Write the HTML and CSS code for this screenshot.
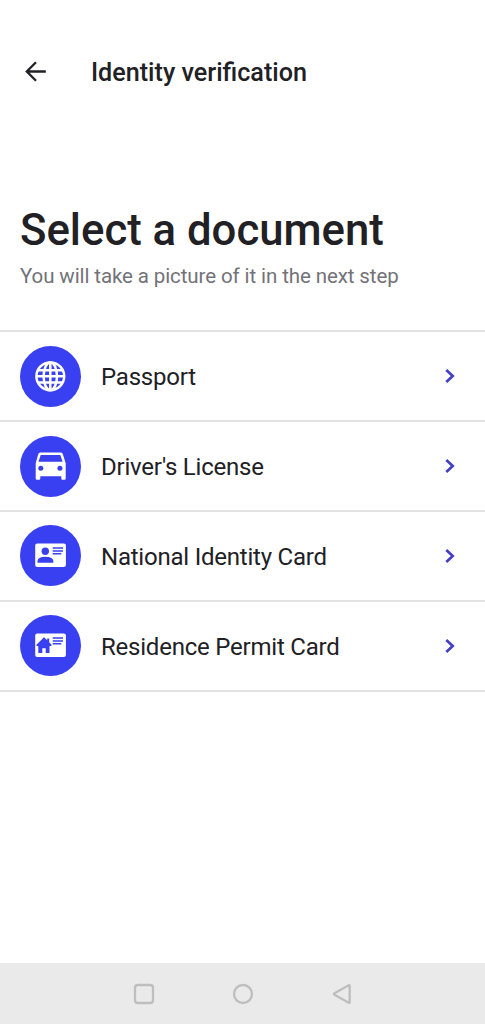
FILE: index.html
```html
<!DOCTYPE html>
<html lang="en">
<head>
<meta charset="utf-8">
<title>Identity verification</title>
<link rel="stylesheet" href="styles.css">
</head>
<body>
<div class="screen">
  <header class="topbar">
    <svg class="back" viewBox="0 0 22 22"><path d="M20.800 10.500H2M11 1.200 1.800 10.500l9.200 9.300"/></svg>
    <span class="topbar-title">Identity verification</span>
  </header>
  <main class="content">
    <h1 class="heading">Select a document</h1>
    <p class="subtitle">You will take a picture of it in the next step</p>
    <ul class="list">
      <li class="row">
        <svg class="icon" viewBox="0 0 61 61"><circle class="disc" cx="30.500" cy="30.500" r="30.500"/><g class="globe"><circle cx="30.300" cy="30.300" r="13.900"/><ellipse cx="30.300" cy="30.300" rx="6.700" ry="13.900"/><path d="M30.300 16.500v28M17.800 24.300h25M16.300 30.300h28M17.800 36.500h25"/></g></svg>
        <span class="label">Passport</span>
        <svg class="chevron" viewBox="0 0 12 16"><path d="M2.300 2 8.700 8l-6.400 6"/></svg>
      </li>
      <li class="row">
        <svg class="icon" viewBox="0 0 61 61"><circle class="disc" cx="30.500" cy="30.500" r="30.500"/><path class="light" d="M20.200 16.500h20.600q1.500 0 2 1.500l2.900 9.200v15.300q0 1.200-1.200 1.200h-2q-1.200 0-1.200-1.200v-2.200H20.300v2.200q0 1.200-1.200 1.200h-2.200q-1.200 0-1.200-1.200V27.200L18.300 18q.5-1.500 1.900-1.500z"/><path class="blue" d="M20.700 19h19.600l2.300 6.800H18.500z"/><circle class="blue" cx="20.800" cy="32.300" r="2.500"/><circle class="blue" cx="39.900" cy="32.300" r="2.500"/></svg>
        <span class="label">Driver's License</span>
        <svg class="chevron" viewBox="0 0 12 16"><path d="M2.300 2 8.700 8l-6.400 6"/></svg>
      </li>
      <li class="row">
        <svg class="icon" viewBox="0 0 61 61"><circle class="disc" cx="30.500" cy="30.500" r="30.500"/><rect class="light" x="15.200" y="18.500" width="30.700" height="23.500" rx="2"/><circle class="blue" cx="25.300" cy="26.300" r="3.700"/><path class="blue" d="M17.500 37.800v-1.500q0-4.500 7.900-4.500t7.900 4.500v1.500z"/><path class="lines" d="M32.700 22.900H43M32.700 25.900H43M32.700 28.800h8.600"/></svg>
        <span class="label">National Identity Card</span>
        <svg class="chevron" viewBox="0 0 12 16"><path d="M2.300 2 8.700 8l-6.400 6"/></svg>
      </li>
      <li class="row">
        <svg class="icon" viewBox="0 0 61 61"><circle class="disc" cx="30.500" cy="30.500" r="30.500"/><rect class="light" x="15.200" y="18.500" width="30.700" height="23.500" rx="2"/><path class="blue" d="M24 22.200l3.200 3.100v-1.700h2v3.700l2.600 2.700-.9 1h-1.400v7h-3.800v-4.700h-3.400V38h-4v-7h-1.400l-.7-1z"/><path class="lines" d="M32.700 22.900H43M32.700 25.900H43M32.700 28.800h8.600"/></svg>
        <span class="label">Residence Permit Card</span>
        <svg class="chevron" viewBox="0 0 12 16"><path d="M2.300 2 8.700 8l-6.400 6"/></svg>
      </li>
    </ul>
  </main>
  <nav class="navbar">
    <svg class="nav-icon" viewBox="0 0 22 22"><rect x="2" y="2" width="18" height="18" rx="2.800"/></svg>
    <svg class="nav-icon" viewBox="0 0 22 22"><circle cx="11" cy="11" r="9"/></svg>
    <svg class="nav-icon" viewBox="0 0 22 22"><path d="M18.700 2.800v16.400q0 1-1 .5L3.500 11.700q-1-.7 0-1.400l14.200-8q1-.5 1 .5z"/></svg>
  </nav>
</div>
</body>
</html>
```
FILE: styles.css
```css
body {
  margin: 0;
  background: #fff;
  color: #212125;
  font-family: Roboto, "Liberation Sans", sans-serif;
}
svg { display: block; flex: none; }
.screen { display: flex; flex-direction: column; height: 1024px; overflow: hidden; }
.topbar { display: flex; align-items: center; gap: 44px; height: 64px; padding: 40px 0 0 25px; }
.back { width: 22px; height: 22px; fill: none; stroke: #212125; stroke-width: 2.3; }
.topbar-title { padding-top: 2px; font-size: 25.15px; font-weight: 500; line-height: 30px; white-space: nowrap; }
.content { flex: 1; padding-top: 100px; }
.heading { margin: 0 20px; font-size: 43.7px; font-weight: 500; line-height: 52px; white-space: nowrap; }
.subtitle { margin: 7px 20px 0; font-size: 20.5px; line-height: 26px; letter-spacing: -0.1px; color: #737278; white-space: nowrap; }
.list { margin: 41.4px 0 0; padding: 0; list-style: none; border-top: 2px solid #e2e2e2; }
.row {
  display: flex;
  align-items: center;
  box-sizing: border-box;
  height: 89.8px;
  padding: 0 29px 0 20px;
  border-bottom: 2px solid #e2e2e2;
}
.icon { width: 61px; height: 61px; }
.disc, .blue { fill: #3840f2; }
.light { fill: #fff; }
.globe { fill: none; stroke: #fff; stroke-width: 2.500; }
.lines { fill: none; stroke: #3840f2; stroke-width: 1.5; }
.label { flex: 1; margin-left: 20px; padding-top: 2px; font-size: 24px; line-height: 30px; letter-spacing: -0.22px; white-space: nowrap; }
.chevron { width: 12px; height: 16px; fill: none; stroke: #443fc8; stroke-width: 2.7; }
.navbar { display: flex; justify-content: center; align-items: center; gap: 77px; height: 61px; background: #eaeaea; }
.nav-icon { width: 22px; height: 22px; fill: none; stroke: #bebebe; stroke-width: 2.3; stroke-linejoin: round; }
```
